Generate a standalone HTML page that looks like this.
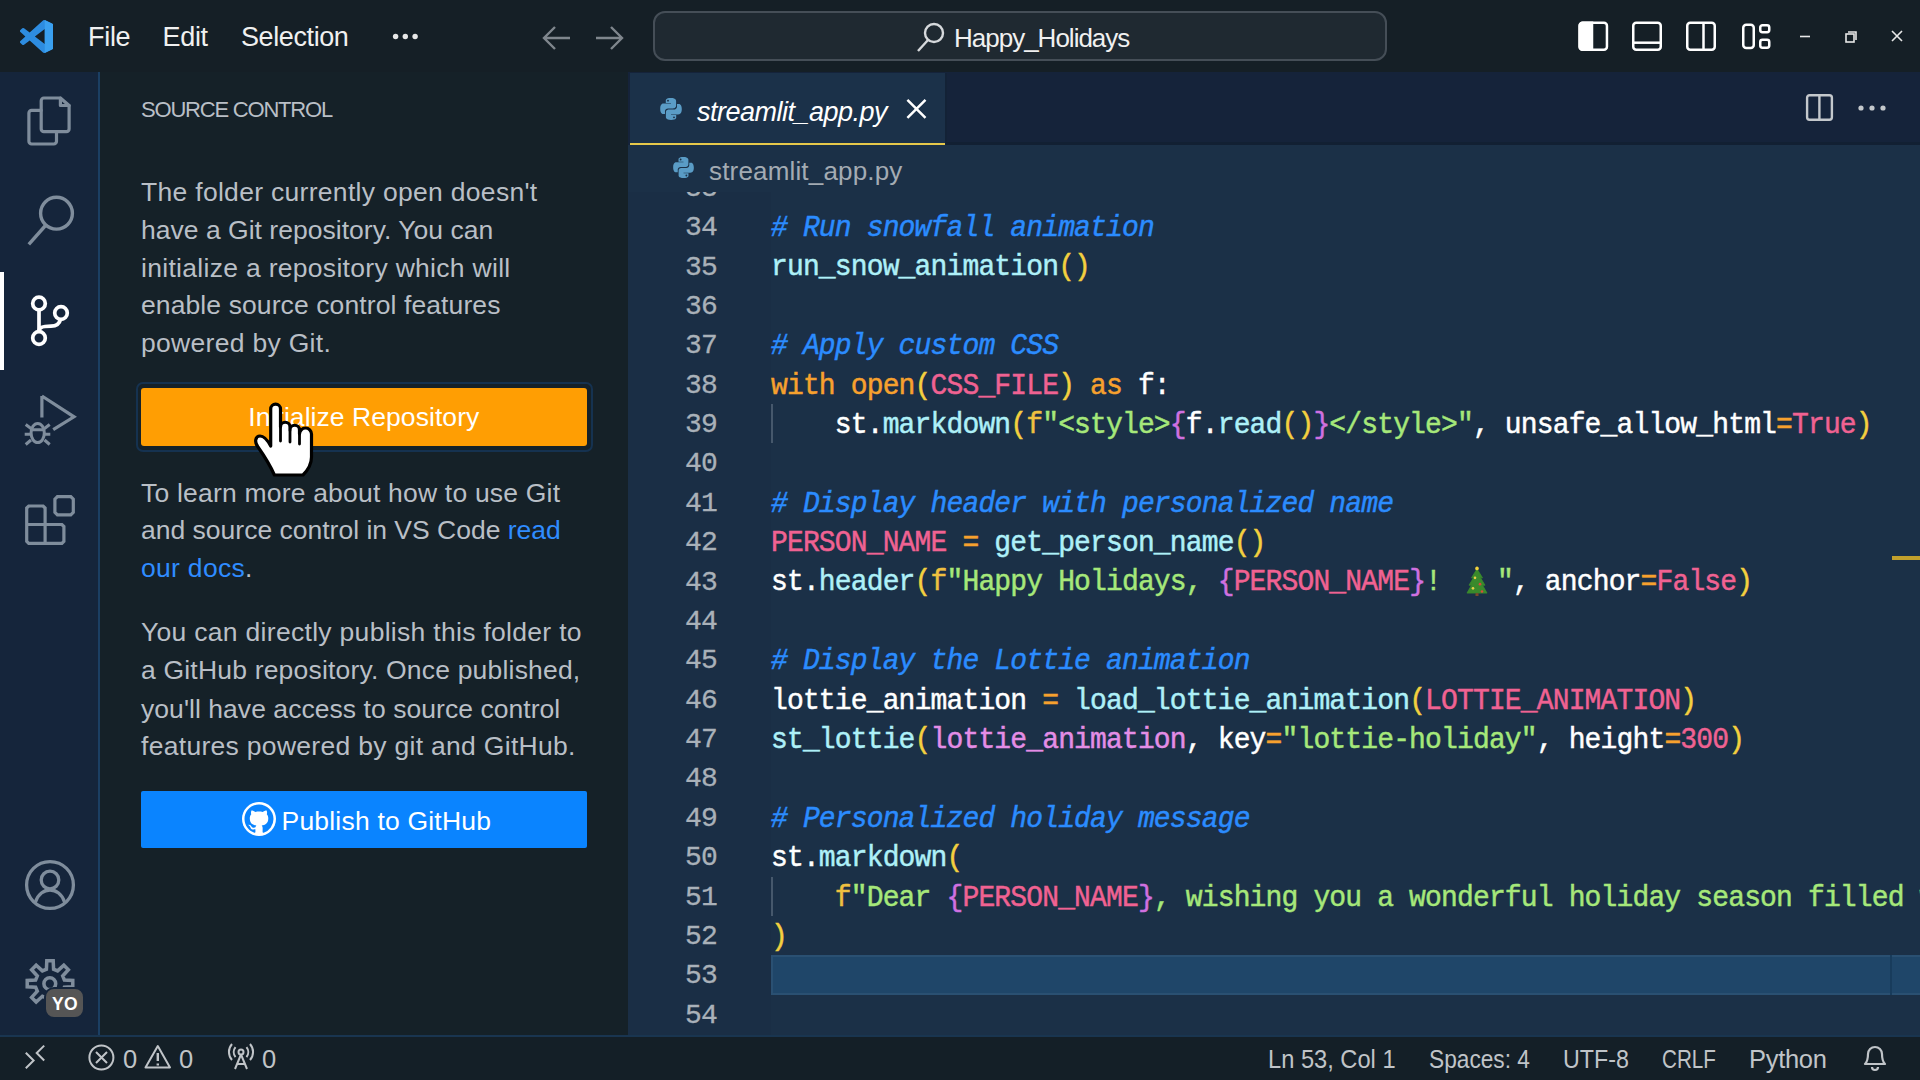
<!DOCTYPE html>
<html><head><meta charset="utf-8">
<style>
*{margin:0;padding:0;box-sizing:border-box}
html,body{width:1920px;height:1080px;overflow:hidden;background:#152128;font-family:"Liberation Sans",sans-serif}
.abs{position:absolute}
.code{font-family:"Liberation Mono",monospace;font-size:28px;letter-spacing:-0.85px;white-space:pre;position:absolute;line-height:39.38px;-webkit-text-stroke:0.45px currentColor}
.it{font-style:italic}
.ln{font-family:"Liberation Mono",monospace;font-size:28px;letter-spacing:-0.85px;position:absolute;text-align:right;color:#a9b1b9;line-height:39.38px;-webkit-text-stroke:0.3px currentColor}
</style></head><body>
<div class="abs" style="left:0;top:0;width:1920px;height:72px;background:#151f26"></div>
<div class="abs" style="left:0;top:72px;width:98px;height:963px;background:#15253b"></div>
<div class="abs" style="left:98px;top:72px;width:2px;height:963px;background:#1b3f63"></div>
<div class="abs" style="left:100px;top:72px;width:528px;height:963px;background:#152128"></div>
<div class="abs" style="left:0;top:1035px;width:1920px;height:45px;background:#141f27;border-top:2px solid #193550"></div>

<svg class="abs" style="left:20px;top:20px" width="33" height="33" viewBox="0 0 100 100"><path fill="#2d8ce0" d="M96.46 10.8L75.86.87a6.23 6.23 0 0 0-7.1 1.2L29.35 38.04 12.19 25.01a4.16 4.16 0 0 0-5.32.24L1.37 30.25a4.16 4.16 0 0 0 0 6.16L16.25 50 1.36 63.58a4.16 4.16 0 0 0 0 6.16l5.5 5a4.16 4.16 0 0 0 5.32.24l17.16-13.03 39.41 35.96a6.23 6.23 0 0 0 7.1 1.2l20.6-9.92A6.25 6.25 0 0 0 100 83.6V16.4a6.25 6.25 0 0 0-3.54-5.6zM75.02 72.7L45.11 50l29.91-22.7z"/><path fill="#3aa0f0" d="M75 0 L100 12 V88 L75 100z"/></svg>
<div class="abs" id="m_file" style="left:88px;top:22px;font-size:27px;letter-spacing:-0.3px;color:#f0f0f0;white-space:pre;">File</div>
<div class="abs" id="m_edit" style="left:162.5px;top:22px;font-size:27px;letter-spacing:-0.3px;color:#f0f0f0;white-space:pre;">Edit</div>
<div class="abs" id="m_sel" style="left:241px;top:22px;font-size:27px;letter-spacing:-0.4px;color:#f0f0f0;white-space:pre;">Selection</div>
<svg class="abs" style="left:388px;top:30px" width="34" height="14"><circle cx="7.6" cy="6.5" r="2.7" fill="#e8e8e8"/><circle cx="17.3" cy="6.5" r="2.7" fill="#e8e8e8"/><circle cx="27.1" cy="6.5" r="2.7" fill="#e8e8e8"/></svg>
<svg class="abs" style="left:540px;top:24px" width="32" height="28" viewBox="0 0 32 28" fill="none" stroke="#7f868d" stroke-width="2.4"><path d="M30 14H4M15 3L4 14l11 11"/></svg>
<svg class="abs" style="left:594px;top:24px" width="32" height="28" viewBox="0 0 32 28" fill="none" stroke="#7f868d" stroke-width="2.4"><path d="M2 14h26M17 3l11 11-11 11"/></svg>
<div class="abs" style="left:653px;top:11px;width:734px;height:50px;border:2px solid #454e57;border-radius:12px;background:#1f2931"></div>
<svg class="abs" style="left:914px;top:20px" width="34" height="34" viewBox="0 0 34 34" fill="none" stroke="#d6d9dc" stroke-width="2.4"><circle cx="20" cy="13" r="9"/><path d="M14 20L4 31"/></svg>
<div class="abs" id="happy" style="left:954px;top:22.5px;font-size:26px;letter-spacing:-1px;color:#f0f0f0;white-space:pre;">Happy_Holidays</div>
<svg class="abs" style="left:1576px;top:20px" width="200" height="34" fill="none" stroke="#ffffff" stroke-width="2.5">
 <rect x="3.65" y="2.85" width="27.3" height="26.9" rx="3"/><path d="M3.65 5.85 a3 3 0 0 1 3-3 H16 V29.75 H6.65 a3 3 0 0 1 -3-3z" fill="#fff"/>
 <rect x="57.25" y="2.85" width="27.5" height="26.9" rx="3"/><path d="M57.25 22.7h27.5"/>
 <rect x="111.25" y="2.85" width="27.5" height="26.9" rx="3"/><path d="M127.5 2.85v26.9"/>
 <rect x="167.25" y="4.65" width="10.5" height="23.35" rx="3"/><rect x="184.25" y="5.25" width="9" height="7" rx="2.2"/><rect x="184.25" y="19.75" width="9" height="8" rx="2.2"/>
</svg>
<svg class="abs" style="left:1790px;top:20px" width="130" height="34" fill="none" stroke="#e8e8e8" stroke-width="1.6">
 <path d="M10 16.5h10"/>
 <rect x="56" y="14" width="8" height="8"/><path d="M58 12h8v8"/>
 <path d="M102 11l10 10M112 11l-10 10"/>
</svg>
<div class="abs" style="left:0;top:272px;width:4px;height:98px;background:#ffffff"></div>
<svg class="abs" style="left:0;top:72px" width="98" height="963" fill="none" stroke="#7f8d9c" stroke-width="3" stroke-linejoin="round" stroke-linecap="round">
 <path d="M41.2 38.3 H31.6 a2.7 2.7 0 0 0 -2.7 2.7 V69.3 a2.7 2.7 0 0 0 2.7 2.7 H53.8 a2.7 2.7 0 0 0 2.7-2.7 V59.7" stroke-width="3.2"/>
 <path d="M43.9 26 H60.4 L69.1 33.5 V57 a2.7 2.7 0 0 1 -2.7 2.7 H43.9 a2.7 2.7 0 0 1 -2.7-2.7 V28.7 a2.7 2.7 0 0 1 2.7-2.7z" stroke-width="3.2"/>
 <path d="M60.4 26 V33.5 H69.1" stroke-width="3.2"/>
 <circle cx="56.5" cy="141.2" r="15.9" stroke-width="3.4"/>
 <path d="M45.5 153.5 L28.8 172.3" stroke-width="3.4" stroke-linecap="butt"/>
 <path d="M41.9 324 V345.4 M41.9 324 L74 344.8 L53.2 357.7" stroke-width="3.2" stroke-linecap="butt" stroke-linejoin="miter"/>
 <ellipse cx="37.7" cy="361" rx="6.6" ry="9.6"/>
 <path d="M31.5 357.7 H44 M25.7 352.5 L31 356.5 M49.7 352.5 L44.5 356.5 M24.7 362.3 H31 M44.5 362.3 H50.3 M25.7 372.5 L31 368 M49.7 372.5 L44.5 368" stroke-linecap="butt"/>
 <path d="M28.7 434 H43.1 L45.1 436 V471.3 H28.7 L26.7 469.3 V436z M26.7 452.5 H61.9 L63.9 454.5 V469.3 L61.9 471.3 H45.1" stroke-width="3.2" stroke-linejoin="miter"/>
 <path d="M57.4 424.7 H70.8 L73.3 427.2 V440.3 L70.8 442.8 H57.4 L54.9 440.3 V427.2z" stroke-width="3.2" stroke-linejoin="miter"/>
 <circle cx="50" cy="813" r="23.4" stroke-width="3.3"/>
 <circle cx="50" cy="808" r="8.8" stroke-width="3.3"/>
 <path d="M35.5 830 C38 822 44 818 50 818 C56 818 62 822 64.5 830" stroke-width="3.3"/>
</svg>
<svg class="abs" style="left:0;top:72px" width="98" height="963" fill="none" stroke="#ffffff" stroke-width="3.7">
 <circle cx="39" cy="231.5" r="6.3"/>
 <circle cx="61" cy="241" r="6.3"/>
 <circle cx="39" cy="266" r="6.3"/>
 <path d="M39 237.8 V259.7"/>
 <path d="M60.5 247.3 C59.5 252 56 254 51 254.2 L45 254.5 C41 254.8 39 256.5 39 259.7"/>
</svg>
<svg class="abs" style="left:0;top:0" width="98" height="1035" fill="none" stroke="#7f8d9c" stroke-width="3.5" stroke-linejoin="miter"><path d="M46.42 969.24 L46.80 960.82 L53.20 960.82 L53.58 969.24 L57.62 970.91 L63.84 965.23 L68.37 969.76 L62.69 975.98 L64.36 980.02 L72.78 980.40 L72.78 986.80 L64.36 987.18 L62.69 991.22 L68.37 997.44 L63.84 1001.97 L57.62 996.29 L53.58 997.96 L53.20 1006.38 L46.80 1006.38 L46.42 997.96 L42.38 996.29 L36.16 1001.97 L31.63 997.44 L37.31 991.22 L35.64 987.18 L27.22 986.80 L27.22 980.40 L35.64 980.02 L37.31 975.98 L31.63 969.76 L36.16 965.23 L42.38 970.91z"/><circle cx="49.8" cy="983.7" r="5.9"/></svg>
<div class="abs" style="left:44.2px;top:987.2px;width:40.6px;height:31.8px;border-radius:10px;border:2px solid #15253b;background:#555555;color:#fff;font-weight:bold;font-size:17.5px;line-height:30.5px;text-align:center;padding-left:1px;letter-spacing:0.3px">YO</div>
<div class="abs" id="src" style="left:141px;top:97px;font-size:22px;letter-spacing:-1.2px;color:#b9bfc6;white-space:pre;">SOURCE CONTROL</div>
<div class="abs" id="p1_0" style="left:141px;top:177.3px;font-size:26.5px;letter-spacing:0.3px;color:#b9bfc6;white-space:pre;">The folder currently open doesn't</div>
<div class="abs" id="p1_1" style="left:141px;top:215.2px;font-size:26.5px;letter-spacing:0.02px;color:#b9bfc6;white-space:pre;">have a Git repository. You can</div>
<div class="abs" id="p1_2" style="left:141px;top:253.4px;font-size:26.5px;letter-spacing:0.3px;color:#b9bfc6;white-space:pre;">initialize a repository which will</div>
<div class="abs" id="p1_3" style="left:141px;top:290.0px;font-size:26.5px;letter-spacing:0.1px;color:#b9bfc6;white-space:pre;">enable source control features</div>
<div class="abs" id="p1_4" style="left:141px;top:328.2px;font-size:26.5px;letter-spacing:0.3px;color:#b9bfc6;white-space:pre;">powered by Git.</div>
<div class="abs" id="p2_0" style="left:141px;top:478.0px;font-size:26.5px;letter-spacing:0.2px;color:#b9bfc6;white-space:pre;">To learn more about how to use Git</div>
<div class="abs" id="p2_1" style="left:141px;top:515.0px;font-size:26.5px;letter-spacing:0.0px;color:#b9bfc6;white-space:pre;">and source control in VS Code <span style="color:#2f8cff">read</span></div>
<div class="abs" id="p2_2" style="left:141px;top:552.5px;font-size:26.5px;letter-spacing:0.3px;color:#b9bfc6;white-space:pre;"><span style="color:#2f8cff">our docs</span>.</div>
<div class="abs" id="p3_0" style="left:141px;top:617.3px;font-size:26.5px;letter-spacing:0.3px;color:#b9bfc6;white-space:pre;">You can directly publish this folder to</div>
<div class="abs" id="p3_1" style="left:141px;top:654.8px;font-size:26.5px;letter-spacing:0.19px;color:#b9bfc6;white-space:pre;">a GitHub repository. Once published,</div>
<div class="abs" id="p3_2" style="left:141px;top:693.7px;font-size:26.5px;letter-spacing:0.05px;color:#b9bfc6;white-space:pre;">you'll have access to source control</div>
<div class="abs" id="p3_3" style="left:141px;top:731.2px;font-size:26.5px;letter-spacing:0.3px;color:#b9bfc6;white-space:pre;">features powered by git and GitHub.</div>
<div class="abs" style="left:135.5px;top:382px;width:457px;height:69.5px;border:2.4px solid #153250;border-radius:7px"></div>
<div class="abs" style="left:141px;top:388px;width:446px;height:58px;background:#ff9e03;border-radius:3px"></div>
<div class="abs" id="init" style="left:248.3px;top:402.4px;font-size:26.5px;letter-spacing:0.06px;color:#ffffff;white-space:pre;">Initialize Repository</div>
<div class="abs" style="left:141px;top:791px;width:446px;height:57px;background:#0a84ff;border-radius:2px"></div>
<svg class="abs" style="left:241.7px;top:802.2px" width="34" height="34" viewBox="0 0 34 34"><circle cx="17" cy="17" r="17" fill="#fff"/><g transform="translate(2.5,2.5) scale(1.8125)"><path fill="#0a84ff" d="M8 0C3.58 0 0 3.58 0 8c0 3.54 2.29 6.53 5.47 7.59.4.07.55-.17.55-.38 0-.19-.01-.82-.01-1.49-2.01.37-2.53-.49-2.69-.94-.09-.23-.48-.94-.82-1.130-.28-.15-.68-.52-.01-.53.63-.01 1.08.58 1.23.82.72 1.21 1.87.87 2.33.66.07-.52.28-.87.51-1.07-1.78-.2-3.64-.89-3.64-3.95 0-.87.31-1.59.82-2.15-.08-.2-.36-1.02.08-2.12 0 0 .67-.21 2.2.82.64-.18 1.32-.27 2-.27.68 0 1.36.09 2 .27 1.53-1.04 2.2-.82 2.2-.82.44 1.1.16 1.92.08 2.12.51.56.82 1.27.82 2.15 0 3.07-1.87 3.75-3.65 3.95.29.25.54.73.54 1.48 0 1.07-.01 1.93-.01 2.2 0 .21.15.46.55.38A8.013 8.013 0 0016 8c0-4.42-3.58-8-8-8z"/></g></svg>
<div class="abs" id="pub" style="left:281.5px;top:805.5px;font-size:26.5px;letter-spacing:0.2px;color:#ffffff;white-space:pre;">Publish to GitHub</div>
<div class="abs" style="left:628px;top:72px;width:1292px;height:73px;background:#15233a"></div>
<div class="abs" style="left:630px;top:73px;width:315px;height:72px;background:#1b3149"></div>
<div class="abs" style="left:630px;top:142.5px;width:315px;height:3px;background:#e6c84a"></div>
<svg class="abs" style="left:659px;top:97px" width="24" height="24" viewBox="0 0 24 24" fill="#5a9cc6"><path fill-rule="evenodd" d="M11.9 1C6.5 1 6.8 3.4 6.8 3.4V5.9H12V6.6H4.7S1.2 6.2 1.2 11.7 4.2 17 4.2 17H6V14.5S5.9 11.4 9 11.4H14.2S17.1 11.5 17.1 8.6V3.9S17.5 1 11.9 1zM9 2.7a.95.95 0 1 1 0 1.9.95.95 0 1 1 0-1.9z"/><path fill-rule="evenodd" d="M12.1 23C17.5 23 17.2 20.6 17.2 20.6V18.1H12V17.4H19.3S22.8 17.8 22.8 12.3 19.8 7 19.8 7H18V9.5S18.1 12.6 15 12.6H9.8S6.9 12.5 6.9 15.4V20.1S6.5 23 12.1 23zM15 21.3a.95.95 0 1 1 0-1.9.95.95 0 1 1 0 1.9z"/></svg>
<div class="abs" id="tab" style="left:697px;top:96.5px;font-size:27px;letter-spacing:-0.5px;color:#ffffff;white-space:pre;font-style:italic">streamlit_app.py</div>
<svg class="abs" style="left:905px;top:97.5px" width="24" height="24" fill="none" stroke="#ffffff" stroke-width="2.5"><path d="M2.4 1.9L20.5 19.9M20.5 1.9L2.4 19.9"/></svg>
<div class="abs" style="left:945px;top:73px;width:1.5px;height:72px;background:#132236"></div>
<div class="abs" style="left:946px;top:141.5px;width:974px;height:3.5px;background:#122033"></div>
<svg class="abs" style="left:1804px;top:93px" width="32" height="32" fill="none" stroke="#c4c8cc" stroke-width="2.4"><rect x="3.1" y="2.2" width="24.8" height="24.6" rx="2.5"/><path d="M15.4 2.2V26.8"/></svg>
<svg class="abs" style="left:1855px;top:100px" width="36" height="16"><circle cx="6" cy="8" r="2.6" fill="#c4c8cc"/><circle cx="17" cy="8" r="2.6" fill="#c4c8cc"/><circle cx="28" cy="8" r="2.6" fill="#c4c8cc"/></svg>
<div class="abs" style="left:628px;top:145px;width:1292px;height:890px;background:#1b3047;overflow:hidden">
<div class="abs" style="left:0;top:0;width:143px;height:890px;background:#1a2e45"></div>
<div class="abs" style="left:143px;top:810.2px;width:1200px;height:39.4px;background:#1f4669;border:2px solid #2a5072"></div>
<div class="abs" style="left:1262px;top:810.2px;width:2px;height:39.4px;background:#183c5c"></div>
<div class="abs" style="left:143px;top:258.9px;width:2px;height:39.4px;background:#46586c"></div>
<div class="abs" style="left:143px;top:731.5px;width:2px;height:39.4px;background:#46586c"></div>
<div class="abs" style="left:1264px;top:410.8px;width:28px;height:4.4px;background:#c2a02c"></div>
<div class="ln" style="top:23.7px;left:0;width:89px;transform:scaleY(0.96);transform-origin:0 18px">33</div>
<div class="code" style="top:24.6px;left:143px;transform:scaleY(1.05);transform-origin:0 18px"></div>
<div class="ln" style="top:63.1px;left:0;width:89px;transform:scaleY(0.96);transform-origin:0 18px">34</div>
<div class="code" style="top:64.0px;left:143px;transform:scaleY(1.05);transform-origin:0 18px"><span style="color:#2b8cff" class="it"># Run snowfall animation</span></div>
<div class="ln" style="top:102.5px;left:0;width:89px;transform:scaleY(0.96);transform-origin:0 18px">35</div>
<div class="code" style="top:103.4px;left:143px;transform:scaleY(1.05);transform-origin:0 18px"><span style="color:#aef0f8">run_snow_animation</span><span style="color:#f4d03f">()</span></div>
<div class="ln" style="top:141.9px;left:0;width:89px;transform:scaleY(0.96);transform-origin:0 18px">36</div>
<div class="code" style="top:142.8px;left:143px;transform:scaleY(1.05);transform-origin:0 18px"></div>
<div class="ln" style="top:181.2px;left:0;width:89px;transform:scaleY(0.96);transform-origin:0 18px">37</div>
<div class="code" style="top:182.1px;left:143px;transform:scaleY(1.05);transform-origin:0 18px"><span style="color:#2b8cff" class="it"># Apply custom CSS</span></div>
<div class="ln" style="top:220.6px;left:0;width:89px;transform:scaleY(0.96);transform-origin:0 18px">38</div>
<div class="code" style="top:221.5px;left:143px;transform:scaleY(1.05);transform-origin:0 18px"><span style="color:#f7a12e">with</span><span style="color:#ffffff"> </span><span style="color:#f7a12e">open</span><span style="color:#f4d03f">(</span><span style="color:#f06292">CSS_FILE</span><span style="color:#f4d03f">)</span><span style="color:#ffffff"> </span><span style="color:#f7a12e">as</span><span style="color:#ffffff"> f:</span></div>
<div class="ln" style="top:260.0px;left:0;width:89px;transform:scaleY(0.96);transform-origin:0 18px">39</div>
<div class="code" style="top:260.9px;left:143px;transform:scaleY(1.05);transform-origin:0 18px"><span style="color:#ffffff">    st.</span><span style="color:#aef0f8">markdown</span><span style="color:#f4d03f">(</span><span style="color:#f0c040">f</span><span style="color:#a6e87a">"&lt;style&gt;</span><span style="color:#d070e0">{</span><span style="color:#ffffff">f.</span><span style="color:#aef0f8">read</span><span style="color:#f4d03f">()</span><span style="color:#d070e0">}</span><span style="color:#a6e87a">&lt;/style&gt;"</span><span style="color:#ffffff">, unsafe_allow_html</span><span style="color:#f7a12e">=</span><span style="color:#f06292">True</span><span style="color:#f4d03f">)</span></div>
<div class="ln" style="top:299.4px;left:0;width:89px;transform:scaleY(0.96);transform-origin:0 18px">40</div>
<div class="code" style="top:300.3px;left:143px;transform:scaleY(1.05);transform-origin:0 18px"></div>
<div class="ln" style="top:338.8px;left:0;width:89px;transform:scaleY(0.96);transform-origin:0 18px">41</div>
<div class="code" style="top:339.7px;left:143px;transform:scaleY(1.05);transform-origin:0 18px"><span style="color:#2b8cff" class="it"># Display header with personalized name</span></div>
<div class="ln" style="top:378.1px;left:0;width:89px;transform:scaleY(0.96);transform-origin:0 18px">42</div>
<div class="code" style="top:379.0px;left:143px;transform:scaleY(1.05);transform-origin:0 18px"><span style="color:#f06292">PERSON_NAME</span><span style="color:#ffffff"> </span><span style="color:#f7a12e">=</span><span style="color:#ffffff"> </span><span style="color:#aef0f8">get_person_name</span><span style="color:#f4d03f">()</span></div>
<div class="ln" style="top:417.5px;left:0;width:89px;transform:scaleY(0.96);transform-origin:0 18px">43</div>
<div class="code" style="top:418.4px;left:143px;transform:scaleY(1.05);transform-origin:0 18px"><span style="color:#ffffff">st.</span><span style="color:#aef0f8">header</span><span style="color:#f4d03f">(</span><span style="color:#f0c040">f</span><span style="color:#a6e87a">"Happy Holidays, </span><span style="color:#d070e0">{</span><span style="color:#f06292">PERSON_NAME</span><span style="color:#d070e0">}</span><span style="color:#a6e87a">! </span><span style="display:inline-block;width:40px;text-align:center"><svg width="40" height="30" viewBox="0 0 40 30" style="vertical-align:-6px"><path d="M20 3.5 L25.5 12 H23.5 L28 19 H25.5 L30 26.5 H10 L14.5 19 H12 L16.5 12 H14.5z" fill="#3a8a2c" stroke="#3a8a2c" stroke-width="0.8" stroke-linejoin="round"/><rect x="18.5" y="26.5" width="3" height="2.8" fill="#7a4a2a"/><circle cx="20" cy="3" r="1.8" fill="#f2d23c"/><circle cx="18" cy="12" r="1.3" fill="#e8d048"/><circle cx="23" cy="18" r="1.3" fill="#d84a3a"/><circle cx="16" cy="22" r="1.3" fill="#e8d048"/><circle cx="25" cy="25" r="1.3" fill="#d84a3a"/></svg></span><span style="color:#a6e87a">"</span><span style="color:#ffffff">, anchor</span><span style="color:#f7a12e">=</span><span style="color:#f06292">False</span><span style="color:#f4d03f">)</span></div>
<div class="ln" style="top:456.9px;left:0;width:89px;transform:scaleY(0.96);transform-origin:0 18px">44</div>
<div class="code" style="top:457.8px;left:143px;transform:scaleY(1.05);transform-origin:0 18px"></div>
<div class="ln" style="top:496.3px;left:0;width:89px;transform:scaleY(0.96);transform-origin:0 18px">45</div>
<div class="code" style="top:497.2px;left:143px;transform:scaleY(1.05);transform-origin:0 18px"><span style="color:#2b8cff" class="it"># Display the Lottie animation</span></div>
<div class="ln" style="top:535.7px;left:0;width:89px;transform:scaleY(0.96);transform-origin:0 18px">46</div>
<div class="code" style="top:536.6px;left:143px;transform:scaleY(1.05);transform-origin:0 18px"><span style="color:#ffffff">lottie_animation </span><span style="color:#f7a12e">=</span><span style="color:#ffffff"> </span><span style="color:#aef0f8">load_lottie_animation</span><span style="color:#f4d03f">(</span><span style="color:#f06292">LOTTIE_ANIMATION</span><span style="color:#f4d03f">)</span></div>
<div class="ln" style="top:575.1px;left:0;width:89px;transform:scaleY(0.96);transform-origin:0 18px">47</div>
<div class="code" style="top:576.0px;left:143px;transform:scaleY(1.05);transform-origin:0 18px"><span style="color:#aef0f8">st_lottie</span><span style="color:#f4d03f">(</span><span style="color:#e48de6">lottie_animation</span><span style="color:#ffffff">, key</span><span style="color:#f7a12e">=</span><span style="color:#a6e87a">"lottie-holiday"</span><span style="color:#ffffff">, height</span><span style="color:#f7a12e">=</span><span style="color:#f06292">300</span><span style="color:#f4d03f">)</span></div>
<div class="ln" style="top:614.4px;left:0;width:89px;transform:scaleY(0.96);transform-origin:0 18px">48</div>
<div class="code" style="top:615.3px;left:143px;transform:scaleY(1.05);transform-origin:0 18px"></div>
<div class="ln" style="top:653.8px;left:0;width:89px;transform:scaleY(0.96);transform-origin:0 18px">49</div>
<div class="code" style="top:654.7px;left:143px;transform:scaleY(1.05);transform-origin:0 18px"><span style="color:#2b8cff" class="it"># Personalized holiday message</span></div>
<div class="ln" style="top:693.2px;left:0;width:89px;transform:scaleY(0.96);transform-origin:0 18px">50</div>
<div class="code" style="top:694.1px;left:143px;transform:scaleY(1.05);transform-origin:0 18px"><span style="color:#ffffff">st.</span><span style="color:#aef0f8">markdown</span><span style="color:#f4d03f">(</span></div>
<div class="ln" style="top:732.6px;left:0;width:89px;transform:scaleY(0.96);transform-origin:0 18px">51</div>
<div class="code" style="top:733.5px;left:143px;transform:scaleY(1.05);transform-origin:0 18px"><span style="color:#ffffff">    </span><span style="color:#f0c040">f</span><span style="color:#a6e87a">"Dear </span><span style="color:#d070e0">{</span><span style="color:#f06292">PERSON_NAME</span><span style="color:#d070e0">}</span><span style="color:#a6e87a">, wishing you a wonderful holiday season filled with joy</span></div>
<div class="ln" style="top:772.0px;left:0;width:89px;transform:scaleY(0.96);transform-origin:0 18px">52</div>
<div class="code" style="top:772.9px;left:143px;transform:scaleY(1.05);transform-origin:0 18px"><span style="color:#f4d03f">)</span></div>
<div class="ln" style="top:811.3px;left:0;width:89px;transform:scaleY(0.96);transform-origin:0 18px">53</div>
<div class="code" style="top:812.2px;left:143px;transform:scaleY(1.05);transform-origin:0 18px"></div>
<div class="ln" style="top:850.7px;left:0;width:89px;transform:scaleY(0.96);transform-origin:0 18px">54</div>
<div class="code" style="top:851.6px;left:143px;transform:scaleY(1.05);transform-origin:0 18px"></div>
</div>
<div class="abs" style="left:628px;top:145px;width:1292px;height:46.5px;background:#1b3047"></div>
<svg class="abs" style="left:672px;top:156px" width="23" height="23" viewBox="0 0 24 24" fill="#5a9cc6"><path fill-rule="evenodd" d="M11.9 1C6.5 1 6.8 3.4 6.8 3.4V5.9H12V6.6H4.7S1.2 6.2 1.2 11.7 4.2 17 4.2 17H6V14.5S5.9 11.4 9 11.4H14.2S17.1 11.5 17.1 8.6V3.9S17.5 1 11.9 1zM9 2.7a.95.95 0 1 1 0 1.9.95.95 0 1 1 0-1.9z"/><path fill-rule="evenodd" d="M12.1 23C17.5 23 17.2 20.6 17.2 20.6V18.1H12V17.4H19.3S22.8 17.8 22.8 12.3 19.8 7 19.8 7H18V9.5S18.1 12.6 15 12.6H9.8S6.9 12.5 6.9 15.4V20.1S6.5 23 12.1 23zM15 21.3a.95.95 0 1 1 0-1.9.95.95 0 1 1 0 1.9z"/></svg>
<div class="abs" id="bread" style="left:709px;top:155.5px;font-size:26px;letter-spacing:0.17px;color:#a3abb3;white-space:pre;">streamlit_app.py</div>
<svg class="abs" style="left:20px;top:1040px" width="300" height="36" fill="none" stroke="#c0c4c8" stroke-width="2">
 <path d="M5.8 12.7 L13.6 20.5 L5.8 28.3 M24.2 5.6 L16.7 13 L24.2 20.5"/>
 <circle cx="81.4" cy="17.5" r="12"/><path d="M76 12l11 11M87 12l-11 11"/>
 <path d="M137.8 6 L150 27.5 H125.5z" stroke-linejoin="round"/><path d="M137.8 13 V21 M137.8 23.5 V25.5" stroke-width="2.4"/>
 <circle cx="221" cy="12" r="2.5"/><path d="M221 14.5 L215 29 M221 14.5 L227 29 M216.5 24 H225.5"/>
 <path d="M215.5 7 a8 8 0 0 0 0 10 M226.5 7 a8 8 0 0 1 0 10 M212 4 a12 12 0 0 0 0 16 M230 4 a12 12 0 0 1 0 16"/>
</svg>
<div class="abs" id="s0a" style="left:123px;top:1045px;font-size:25.5px;letter-spacing:0px;color:#c0c4c8;white-space:pre;">0</div>
<div class="abs" id="s0b" style="left:179px;top:1045px;font-size:25.5px;letter-spacing:0px;color:#c0c4c8;white-space:pre;">0</div>
<div class="abs" id="s0c" style="left:262px;top:1045px;font-size:25.5px;letter-spacing:0px;color:#c0c4c8;white-space:pre;">0</div>
<div class="abs" id="ln" style="left:1268px;top:1045px;font-size:25.5px;letter-spacing:0px;color:#c0c4c8;white-space:pre;transform:scaleX(0.928);transform-origin:0 0;">Ln 53, Col 1</div>
<div class="abs" id="sp" style="left:1429px;top:1045px;font-size:25.5px;letter-spacing:0px;color:#c0c4c8;white-space:pre;transform:scaleX(0.89);transform-origin:0 0;">Spaces: 4</div>
<div class="abs" id="utf" style="left:1563px;top:1045px;font-size:25.5px;letter-spacing:0px;color:#c0c4c8;white-space:pre;transform:scaleX(0.912);transform-origin:0 0;">UTF-8</div>
<div class="abs" id="crlf" style="left:1662px;top:1045px;font-size:25.5px;letter-spacing:0px;color:#c0c4c8;white-space:pre;transform:scaleX(0.81);transform-origin:0 0;">CRLF</div>
<div class="abs" id="pyl" style="left:1749px;top:1045px;font-size:25.5px;letter-spacing:-0.3px;color:#c0c4c8;white-space:pre;">Python</div>
<svg class="abs" style="left:1860px;top:1043px" width="30" height="30" fill="none" stroke="#c0c4c8" stroke-width="2.2" stroke-linejoin="round"><path d="M5 21 C8 18 8 15 8 11 a7 7 0 0 1 14 0 C22 15 22 18 25 21z"/><path d="M12 24 a3 3 0 0 0 6 0"/></svg>
<svg class="abs" style="left:250px;top:399px" width="70" height="84" viewBox="0 0 70 84"><path fill="#fff" stroke="#000" stroke-width="3.2" stroke-linejoin="round" d="M20.7 47 V10 A4.9 4.9 0 0 1 30.5 10 V28 A4.75 4.75 0 0 1 40 28 V31 A4.75 4.75 0 0 1 49.5 31 V35 A6 6 0 0 1 61.5 35 V58 C61.5 66 57 72 53 76 H24.4 C20 66 15 58 8 48 C4 43 5.5 37 10 37 C14 37 18 42 20.7 47z"/><path stroke="#000" stroke-width="2.8" stroke-linecap="round" d="M30.5 29 V42 M40 32 V43 M49.5 36 V45"/></svg>
</body></html>
